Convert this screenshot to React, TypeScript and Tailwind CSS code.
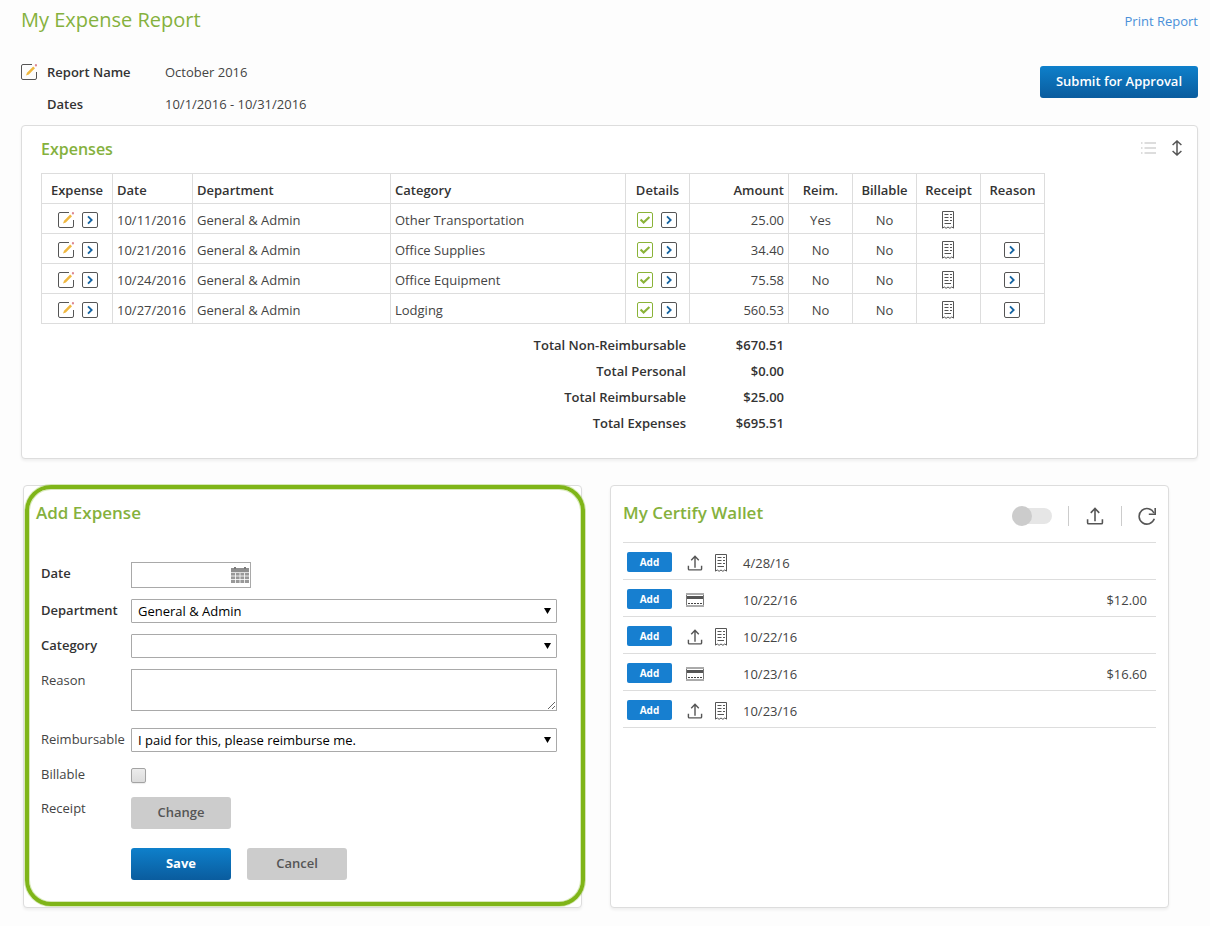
import React from "react";

const expenses = [
  { date: "10/11/2016", department: "General & Admin", category: "Other Transportation", amount: "25.00", reim: "Yes", billable: "No", reason: false },
  { date: "10/21/2016", department: "General & Admin", category: "Office Supplies", amount: "34.40", reim: "No", billable: "No", reason: true },
  { date: "10/24/2016", department: "General & Admin", category: "Office Equipment", amount: "75.58", reim: "No", billable: "No", reason: true },
  { date: "10/27/2016", department: "General & Admin", category: "Lodging", amount: "560.53", reim: "No", billable: "No", reason: true },
];

const totals = [
  ["Total Non-Reimbursable", "$670.51"],
  ["Total Personal", "$0.00"],
  ["Total Reimbursable", "$25.00"],
  ["Total Expenses", "$695.51"],
];

const wallet = [
  { kind: "receipt", date: "4/28/16", amount: "" },
  { kind: "card", date: "10/22/16", amount: "$12.00" },
  { kind: "receipt", date: "10/22/16", amount: "" },
  { kind: "card", date: "10/23/16", amount: "$16.60" },
  { kind: "receipt", date: "10/23/16", amount: "" },
];

function EditIcon() {
  return (
    <svg width="16" height="16" viewBox="0 0 16 16" fill="none" className="block">
      <path d="M11 .5H2A1.500 1.500 0 0 0 .5 2v12A1.500 1.500 0 0 0 2 15.500h12a1.500 1.500 0 0 0 1.500-1.500V8" stroke="#555" />
      <path d="M5 11.500l1-2.800 6.200-6.200 1.800 1.800-6.200 6.200z" fill="#efb73e" />
      <circle cx="15" cy="1.200" r="1.200" fill="#dd8a94" />
    </svg>
  );
}

function OpenIcon() {
  return (
    <svg width="16" height="16" viewBox="0 0 16 16" fill="none" className="block">
      <rect x=".5" y=".5" width="15" height="15" rx="1.500" stroke="#555" />
      <path d="M6 4.300L9.700 8 6 11.700" stroke="#1462a0" strokeWidth="1.800" />
    </svg>
  );
}

function CheckIcon() {
  return (
    <svg width="16" height="16" viewBox="0 0 16 16" fill="none" className="block">
      <rect x=".5" y=".5" width="15" height="15" rx="1.500" stroke="#8ab338" />
      <path d="M3.600 7.500l3 3 5.800-5.500" stroke="#8ab338" strokeWidth="2.200" />
    </svg>
  );
}

function ReceiptIcon() {
  return (
    <svg width="12" height="18" viewBox="0 0 12 18" fill="none" stroke="#555" className="block">
      <path d="M.5 17.200V.5h11v16.700M.5 17l1.800-1 1.800 1.300L6 16l1.900 1.300L9.700 16l1.800 1" />
      <path d="M2.500 3.500h4M8 3.500h2M2.500 6.500h4M8 6.500h2M2.500 9.500h4M8 9.500h2M2.500 12.500H9" />
    </svg>
  );
}

function UploadIcon({ size }: { size: number }) {
  return (
    <svg width={size} height={size} viewBox="0 0 16 17" fill="none" stroke="#555" strokeWidth="1.500" className="block">
      <path d="M1 11.500v3.300a1 1 0 0 0 1 1h12a1 1 0 0 0 1-1v-3.300M8 13.500V1.500M4 5.500L8 1.400l4 4.100" />
    </svg>
  );
}

function CardIcon() {
  return (
    <svg width="18" height="14" viewBox="0 0 18 14" fill="none" className="block">
      <path d="M0 1h18" stroke="#aaa" strokeWidth="2" />
      <path d="M0 4.500h18" stroke="#555" strokeWidth="3" />
      <path d="M.5 2v11.500M17.500 2v11.500" stroke="#777" />
      <path d="M0 13h18" stroke="#aaa" strokeWidth="2" />
      <path d="M2 10.500h2M5 10.500h2M8 10.500h2M11 10.500h2M14 10.500h2" stroke="#444" />
    </svg>
  );
}

function RefreshIcon() {
  return (
    <svg width="18" height="19" viewBox="0 0 18 19" fill="none" stroke="#555" strokeWidth="1.600" className="block">
      <path d="M16 6A7.800 7.800 0 1 0 16.300 11.800" />
      <path d="M17.200 1v6.300h-6.400" />
    </svg>
  );
}

function ListIcon() {
  return (
    <svg width="15" height="12" viewBox="0 0 15 12" stroke="#ddd" className="block">
      <path d="M0 1h1.500M3.500 1H15M0 6h1.500M3.500 6H15M0 11h1.500M3.500 11H15" strokeWidth="2" />
    </svg>
  );
}

function ResizeIcon() {
  return (
    <svg width="10" height="16" viewBox="0 0 10 16" fill="none" stroke="#555" strokeWidth="1.500" className="block">
      <path d="M5 1v14M.6 5L5 1l4.400 4M.6 11L5 15l4.400-4" />
    </svg>
  );
}

function CalendarIcon() {
  return (
    <svg width="18" height="16" viewBox="0 0 18 16" className="block">
      <path d="M0 1h18v4H0z" fill="#8f8f8f" />
      <path d="M3 0h2v2H3zM13 0h2v2h-2z" fill="#777" />
      <path d="M0 6h18v10H0z" fill="#999" />
      <path d="M4.500 5.500V16M9 5.500V16M13.500 5.500V16M0 9h18M0 12.500h18" stroke="#fff" strokeWidth=".8" />
      <path d="M0 5.500h18" stroke="#ddd" />
    </svg>
  );
}

function Select({ id, children }: { id: string; children?: React.ReactNode }) {
  return (
    <div className="relative flex-1">
      <select id={id} className="block h-6 w-full appearance-none rounded-[1px] border border-[#a9a9a9] bg-white px-1.5 text-[13px] leading-[22px] text-black">
        {children}
      </select>
      <svg width="7" height="6" viewBox="0 0 7 6" className="pointer-events-none absolute right-1.5 top-[9px]">
        <path d="M0 0h7L3.500 6z" fill="#000" />
      </svg>
    </div>
  );
}

function Row({ id, label, strong, children }: { id: string; label: string; strong?: boolean; children: React.ReactNode }) {
  return (
    <div className="flex items-start">
      <label htmlFor={id} className={strong ? "w-[90px] shrink-0 font-semibold leading-[22px] text-[#333]" : "w-[90px] shrink-0 leading-[22px]"}>
        {label}
      </label>
      {children}
    </div>
  );
}

const card = "relative rounded border border-[#ddd] bg-white shadow-[0_2px_3px_rgba(0,0,0,0.06)]";
const heading = "font-semibold leading-6 text-[#85b13d]";
const th = "border border-[#ddd] px-1 pt-1 font-semibold text-[#333]";
const td = "border border-[#ddd] px-1 pt-1";
const iconCell = "border border-[#ddd] pt-[2px] pr-[2px]";
const blue = "h-8 rounded-[3px] bg-linear-to-b from-[#0e80cb] to-[#0a5c9e] text-white";
const grey = "h-8 w-[100px] rounded-[3px] bg-[#ccc] font-semibold text-[#555]";

export default function App() {
  return (
    <main className="min-h-screen bg-[#fdfdfd] pb-4 pl-[21px] pr-3 pt-1 font-['Open_Sans',sans-serif] text-[13px] text-[#444]">
      <header className="flex h-8 items-center justify-between">
        <h1 className="text-xl text-[#85b13d]">My Expense Report</h1>
        <a href="#print" className="pt-1 text-[#4a90d9]">Print Report</a>
      </header>

      <div className="mt-5 flex items-start justify-between">
        <dl className="grid grid-cols-[26px_118px_auto] leading-8">
          <div className="flex items-center">
            <button aria-label="Edit report"><EditIcon /></button>
          </div>
          <dt className="font-semibold text-[#333]">Report Name</dt>
          <dd>October 2016</dd>
          <dt className="col-start-2 font-semibold text-[#333]">Dates</dt>
          <dd>10/1/2016 - 10/31/2016</dd>
        </dl>
        <button className={`${blue} mt-2.5 px-4 font-semibold`}>Submit for Approval</button>
      </div>

      <section className={`${card} mt-[5px] pb-[21px] pl-[19px] pr-[15px] pt-[11px]`}>
        <div className="flex justify-between">
          <h2 className={`${heading} text-base`}>Expenses</h2>
          <div className="flex h-[22px] items-center gap-4">
            <button aria-label="List view"><ListIcon /></button>
            <button aria-label="Resize"><ResizeIcon /></button>
          </div>
        </div>
        <table className="mt-3 w-[1004px] table-fixed border-collapse">
          <colgroup>
            <col className="w-[71px]" />
            <col className="w-[80px]" />
            <col className="w-[198px]" />
            <col className="w-[235px]" />
            <col className="w-[64px]" />
            <col className="w-[99px]" />
            <col className="w-[64px]" />
            <col className="w-[64px]" />
            <col className="w-[64px]" />
            <col className="w-[64px]" />
          </colgroup>
          <thead>
            <tr className="h-[30px]">
              <th className={`${th} text-center`}>Expense</th>
              <th className={`${th} text-left`}>Date</th>
              <th className={`${th} text-left`}>Department</th>
              <th className={`${th} text-left`}>Category</th>
              <th className={`${th} text-center`}>Details</th>
              <th className={`${th} text-right`}>Amount</th>
              <th className={`${th} text-center`}>Reim.</th>
              <th className={`${th} text-center`}>Billable</th>
              <th className={`${th} text-center`}>Receipt</th>
              <th className={`${th} text-center`}>Reason</th>
            </tr>
          </thead>
          <tbody>
            {expenses.map((e) => (
              <tr key={e.date} className="h-[30px]">
                <td className={iconCell}>
                  <div className="flex justify-center gap-2 pl-1">
                    <button aria-label="Edit expense"><EditIcon /></button>
                    <button aria-label="Open expense"><OpenIcon /></button>
                  </div>
                </td>
                <td className={td}>{e.date}</td>
                <td className={td}>{e.department}</td>
                <td className={td}>{e.category}</td>
                <td className={iconCell}>
                  <div className="flex justify-center gap-2">
                    <button aria-label="Details complete"><CheckIcon /></button>
                    <button aria-label="Open details"><OpenIcon /></button>
                  </div>
                </td>
                <td className={`${td} text-right`}>{e.amount}</td>
                <td className={`${td} text-center`}>{e.reim}</td>
                <td className={`${td} text-center`}>{e.billable}</td>
                <td className={iconCell}>
                  <div className="flex justify-center">
                    <button aria-label="View receipt"><ReceiptIcon /></button>
                  </div>
                </td>
                <td className={iconCell}>
                  <div className="flex justify-center">
                    {e.reason && <button aria-label="View reason"><OpenIcon /></button>}
                  </div>
                </td>
              </tr>
            ))}
          </tbody>
        </table>
        <table className="mt-[9px] w-[743px] text-right font-semibold text-[#333]">
          <tbody>
            {totals.map(([label, value]) => (
              <tr key={label} className="h-[26px]">
                <th scope="row" className="text-right font-semibold">{label}</th>
                <td className="w-[98px]">{value}</td>
              </tr>
            ))}
          </tbody>
        </table>
      </section>

      <div className="mt-[26px] grid grid-cols-2 gap-7 pl-[2px] pr-[29px]">
        <section className={`${card} px-3 pb-[27px] pt-[15px]`}>
          <h2 className={`${heading} text-[17px]`}>Add Expense</h2>
          <form className="mt-[37px] pl-[5px] pr-3" onSubmit={(e) => e.preventDefault()}>
            <div className="flex flex-col gap-[11px]">
              <Row id="date" label="Date" strong>
                <div className="relative w-[120px]">
                  <input id="date" type="text" className="block h-[26px] w-full border border-[#a9a9a9] bg-white pl-1.5 pr-6" />
                  <button type="button" aria-label="Pick a date" className="absolute right-[2px] top-[5px]"><CalendarIcon /></button>
                </div>
              </Row>
              <Row id="department" label="Department" strong>
                <Select id="department"><option>General &amp; Admin</option></Select>
              </Row>
              <Row id="category" label="Category" strong>
                <Select id="category"><option></option></Select>
              </Row>
              <Row id="reason" label="Reason">
                <textarea id="reason" className="block h-[42px] flex-1 border border-[#a9a9a9] bg-white px-1.5" />
              </Row>
            </div>
            <div className="mt-[17px]">
              <Row id="reimbursable" label="Reimbursable">
                <Select id="reimbursable"><option>I paid for this, please reimburse me.</option></Select>
              </Row>
            </div>
            <div className="mt-[11px]">
              <Row id="billable" label="Billable">
                <input id="billable" type="checkbox" className="mt-[5px] size-[15px] appearance-none rounded-[2px] border border-[#a3a3a3] bg-linear-to-b from-[#ececec] to-[#dcdcdc] shadow-[0_1px_1px_rgba(0,0,0,0.08)]" />
              </Row>
            </div>
            <div className="mt-3">
              <Row id="receipt" label="Receipt">
                <button id="receipt" type="button" className={grey}>Change</button>
              </Row>
            </div>
            <div className="mt-[19px] flex gap-4 pl-[90px]">
              <button type="submit" className={`${blue} w-[100px] font-bold`}>Save</button>
              <button type="button" className={grey}>Cancel</button>
            </div>
          </form>
          <div className="pointer-events-none absolute -right-1 bottom-px left-px -top-px rounded-[26px] border-4 border-[#7fb518] shadow-[0_0_0_1px_rgba(127,181,24,0.3),inset_0_0_0_1px_rgba(127,181,24,0.3)]" />
        </section>

        <section className={`${card} px-3 pt-[15px]`}>
          <div className="flex items-start justify-between">
            <h2 className={`${heading} text-[17px]`}>My Certify Wallet</h2>
            <div className="mt-[5px] flex h-5 items-center gap-4">
              <button role="switch" aria-checked="false" aria-label="Show all" className="flex h-4 w-10 items-center rounded-full bg-[#e6e6e6]">
                <span className="size-5 shrink-0 rounded-full bg-[#ccc]" />
              </button>
              <span className="h-5 w-px bg-[#ccc]" />
              <button aria-label="Upload" className="flex w-5 justify-center"><UploadIcon size={18} /></button>
              <span className="h-5 w-px bg-[#ccc]" />
              <button aria-label="Refresh"><RefreshIcon /></button>
            </div>
          </div>
          <table className="mt-4 w-full border-collapse">
            <tbody>
              {wallet.map((w, i) => (
                <tr key={i} className="h-[37px] border-y border-[#ddd]">
                  <td className="w-[63px] pl-1 pt-[2px]">
                    <button className="block h-5 w-[45px] rounded-[2px] bg-[#177fd0] text-[10px] font-bold text-white">Add</button>
                  </td>
                  <td className="w-[57px] pt-1">
                    {w.kind === "card" ? (
                      <CardIcon />
                    ) : (
                      <div className="flex items-center gap-3 pl-px">
                        <UploadIcon size={16} />
                        <ReceiptIcon />
                      </div>
                    )}
                  </td>
                  <td className="pt-1.5">{w.date}</td>
                  <td className="pr-[9px] pt-1.5 text-right">{w.amount}</td>
                </tr>
              ))}
            </tbody>
          </table>
        </section>
      </div>
    </main>
  );
}
